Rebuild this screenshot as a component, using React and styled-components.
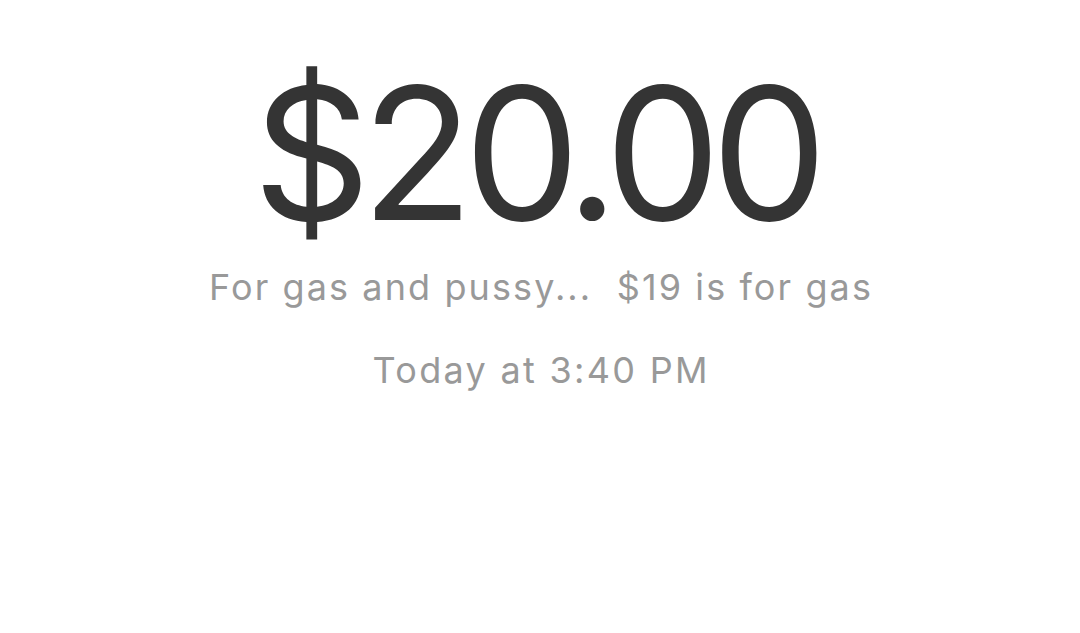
import React from 'react';
import styled, { createGlobalStyle } from 'styled-components';

const GlobalStyle = createGlobalStyle`
  html, body {
    margin: 0;
    padding: 0;
    background: #ffffff;
  }
  body {
    font-family: 'Inter', 'Liberation Sans', sans-serif;
  }
`;

const Page = styled.div`
  width: 1080px;
  height: 633px;
  display: flex;
  flex-direction: column;
  align-items: center;
  padding-top: 53px;
  box-sizing: border-box;
  background: #ffffff;
`;

// letter-spacing leaves a trailing gap; padding evens it out so the text stays centred
const Amount = styled.div`
  font-size: 184px;
  line-height: 200px;
  font-weight: 400;
  color: #343434;
  letter-spacing: -9.5px;
  padding-right: 9.5px;
`;

const Caption = styled.div`
  margin-top: ${(p) => p.$gap}px;
  font-size: 36px;
  line-height: 44px;
  color: #999999;
  white-space: pre;
  letter-spacing: ${(p) => p.$spacing}px;
  padding-left: ${(p) => p.$spacing}px;
`;

export default function App() {
  return (
    <>
      <GlobalStyle />
      <Page>
        <Amount>$20.00</Amount>
        <Caption $gap={12} $spacing={2.1}>
          For gas and pussy...  $19 is for gas
        </Caption>
        <Caption $gap={39} $spacing={2.3}>
          Today at 3:40 PM
        </Caption>
      </Page>
    </>
  );
}
